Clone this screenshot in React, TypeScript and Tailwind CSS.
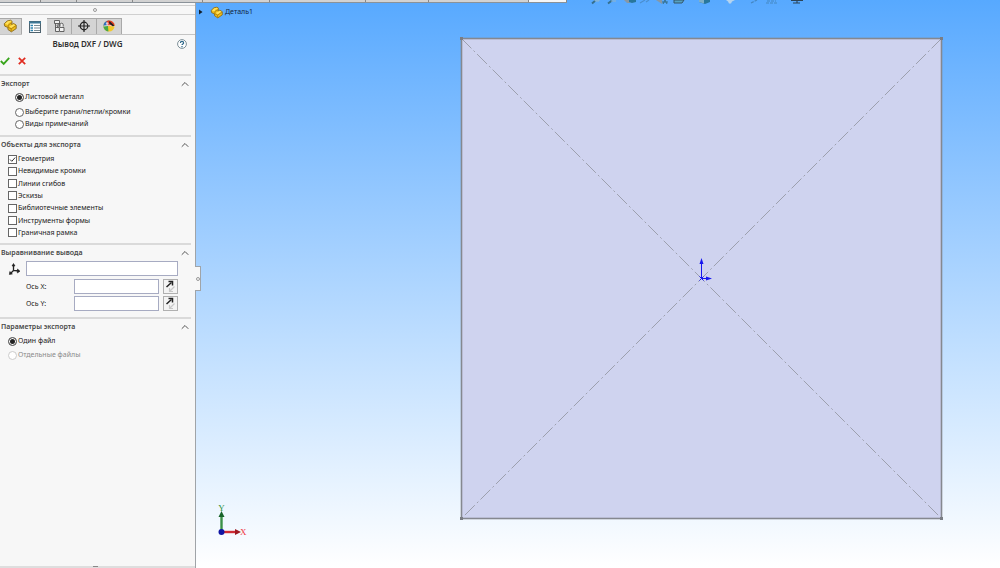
import { useState, type ReactNode } from "react"
import { ChevronUp } from "lucide-react"

const OBJECTS = [
  "Геометрия",
  "Невидимые кромки",
  "Линии сгибов",
  "Эскизы",
  "Библиотечные элементы",
  "Инструменты формы",
  "Граничная рамка",
]

function PartIcon({ className }: { className?: string }) {
  return (
    <svg viewBox="0 0 14 14" className={className} aria-hidden="true">
      <path
        d="M1.2 4.8 4.2 2l3.4-.8 1.6 1.3-.6 3 2-1 2.6 1.6v3.5L8.4 12.8 5 10.6 4.8 8.4 1.8 7.2z"
        fill="#efbd1c"
        stroke="#8a6a18"
        strokeWidth=".9"
        strokeLinejoin="round"
      />
      <path d="m2 4.8 2.9-2.5 2.6-.5 1 .8-2.9 1.5-.4 1.8zM6.2 7.6l4.4-2.4 1.7 1-4 2.7z" fill="#ffe15c" />
      <path d="M5.2 6v2.4l3 1.4 4.5-3M8.2 9.8v2.6M5.2 6l3.4-2" fill="none" stroke="#a87b08" strokeWidth=".8" />
    </svg>
  )
}

function PropertiesIcon() {
  return (
    <svg viewBox="0 0 14 14" className="h-[14px] w-[14px]" aria-hidden="true">
      <rect x="1.5" y="1.5" width="11" height="11" fill="#fff" stroke="#4d626e" />
      <path d="M1 2.5h12" stroke="#3d7896" strokeWidth="2" />
      <path d="M2.5 5.5h2.5M2.5 8h2.5M2.5 10.5h2.5" stroke="#2e82ad" strokeWidth="1.6" />
      <path d="M6 5.5h6M6 8h6M6 10.5h6" stroke="#7b8c94" strokeWidth="1" />
    </svg>
  )
}

function ConfigIcon() {
  return (
    <svg viewBox="0 0 14 14" className="h-[14px] w-[14px]" fill="none" stroke="#555" aria-hidden="true">
      <path d="M2.5 1.5h5v3h-5zM3.5 4.5v8H7M3.5 8.5h2.5" fill="#eee" strokeWidth=".9" />
      <path d="M5 6.5 7.5 4v3.5L6 9z" fill="#999" strokeWidth=".8" />
      <path d="M8 7.5V5.8a1.6 1.6 0 0 1 3.2 0v1.7M7.5 8.5h4.5v4H7.5z" fill="#f2f2f2" strokeWidth=".9" />
    </svg>
  )
}

function TargetIcon() {
  return (
    <svg viewBox="0 0 14 14" className="h-[14px] w-[14px]" fill="none" stroke="#222" aria-hidden="true">
      <circle cx="7" cy="7" r="3.8" strokeWidth="1.2" />
      <path d="M7 1v12M1 7h12" strokeWidth="1.2" />
    </svg>
  )
}

function AppearanceIcon() {
  return (
    <svg viewBox="0 0 14 14" className="h-[14px] w-[14px]" aria-hidden="true">
      <circle cx="7" cy="7" r="5.6" fill="#f2c92c" />
      <path d="M7 6.5V1.4A5.6 5.6 0 0 0 1.4 7z" fill="#2f6ec0" />
      <path d="M5 6.8 4.6 2A5.6 5.6 0 0 1 12.6 7z" fill="#e23b27" />
      <path d="M1.4 7H6l.4 5.6A5.6 5.6 0 0 1 1.4 7z" fill="#49a746" />
      <path d="M1.6 7.1 7 6.3l5.5.9" fill="none" stroke="#fff" strokeWidth=".7" />
      <path d="m7.5 2 4.8 4.5-1.3 1L7 4.2z" fill="#222" />
      <circle cx="5.2" cy="4.6" r="1.3" fill="#fff" opacity=".7" />
    </svg>
  )
}

const TABS = [
  { label: "Дерево", icon: <PartIcon className="h-[14px] w-[14px]" /> },
  { label: "Свойства", icon: <PropertiesIcon /> },
  { label: "Конфигурации", icon: <ConfigIcon /> },
  { label: "Размеры", icon: <TargetIcon /> },
  { label: "Внешний вид", icon: <AppearanceIcon /> },
]

function Section({ title, className, children }: { title: string; className: string; children: ReactNode }) {
  return (
    <section className={`mr-[4px] border-t-2 border-[#dadada] pt-[3px] ${className}`}>
      <h2 className="flex h-[10px] items-center justify-between pl-px font-semibold text-[#484848]">
        {title}
        <button type="button" aria-label={title}>
          <ChevronUp className="h-[12px] w-[12px] text-[#555]" strokeWidth={2} />
        </button>
      </h2>
      {children}
    </section>
  )
}

type RadioProps = {
  name: string
  label: string
  checked: boolean
  disabled?: boolean
  onChange?: () => void
}

function Radio({ name, label, checked, disabled, onChange }: RadioProps) {
  return (
    <label className="flex h-[12px] items-center gap-px has-disabled:text-[#8a8a8a]">
      <input
        type="radio"
        name={name}
        checked={checked}
        disabled={disabled}
        onChange={onChange}
        className="h-[9px] w-[9px] shrink-0 appearance-none rounded-full border border-[#666] bg-white checked:bg-[#222] checked:shadow-[inset_0_0_0_1px_white] disabled:border-[#ccc]"
      />
      {label}
    </label>
  )
}

function AxisRow({ label }: { label: string }) {
  return (
    <div className="flex h-[15px] items-center">
      <label className="flex flex-1 items-center">
        <span className="w-[48px]">{label}</span>
        <input type="text" className="h-[15px] w-0 flex-1 border border-[#a7abc2] bg-white px-1 outline-none" />
      </label>
      <button
        type="button"
        aria-label={`Обратить: ${label}`}
        className="ml-1 flex h-[15px] w-[15px] items-center justify-center border border-[#b0b0b0] bg-[#f4f4f4]"
      >
        <svg viewBox="0 0 13 13" className="h-[13px] w-[13px]" fill="none" aria-hidden="true">
          <path d="m2.5 7 5-4.5" stroke="#222" strokeWidth="1.5" />
          <path d="M4.5 1.6h4v4" stroke="#222" strokeWidth="1.5" />
          <path d="M10.5 6.5 6 11M5.5 8v3.5H9" stroke="#c8c8c8" strokeWidth="1.2" />
        </svg>
      </button>
    </div>
  )
}

function PropertyPanel() {
  const [exportMode, setExportMode] = useState(0)
  const [checked, setChecked] = useState([true, false, false, false, false, false, false])

  const toggle = (index: number) => setChecked(checked.map((value, i) => (i === index ? !value : value)))

  return (
    <aside className="relative flex w-[196px] shrink-0 flex-col border-r border-[#a0a4a8] bg-[#f7f7f7] pt-[5px] text-[7px] leading-[10px] text-[#202020]">
      <div className="flex h-[10px] items-center justify-center border-y border-[#d0d0d0] pr-[6px]">
        <span className="h-[4px] w-[4px] rounded-full border border-[#999]" />
      </div>

      <div className="mt-[3px] flex h-[17px] border-b border-[#c4c4c4]">
        {TABS.map((tab, i) => (
          <button
            key={tab.label}
            type="button"
            aria-label={tab.label}
            className={
              i === 1
                ? "-mb-px flex w-[25px] items-center justify-center bg-[#f7f7f7]"
                : "flex w-[25px] items-center justify-center border-r border-t border-[#a9a9a9] bg-[#d4d4d4] pb-px first:w-[22px] first:pr-[2px]"
            }
          >
            {tab.icon}
          </button>
        ))}
      </div>

      <header className="mt-[3px] flex h-[12px] items-center pr-[8px]">
        <h1 className="flex-1 pr-[2px] text-center text-[8px] font-semibold text-[#303030]">Вывод DXF / DWG</h1>
        <button type="button" aria-label="Справка">
          <svg viewBox="0 0 10 10" className="h-[10px] w-[10px]" fill="none" aria-hidden="true">
            <circle cx="5" cy="5" r="4.4" fill="#fff" stroke="#6f838c" strokeWidth=".9" />
            <path d="M3.4 3.9c0-2 3.2-2 3.2 0 0 1-1.6 1-1.6 2.2M5 7v1.2" stroke="#2b6689" strokeWidth="1.2" />
          </svg>
        </button>
      </header>

      <div className="flex h-[24px] items-center gap-[8px] pb-[2px]">
        <button type="button" aria-label="ОК">
          <svg viewBox="0 0 10 10" className="h-[10px] w-[10px]" fill="none" aria-hidden="true">
            <path d="m.8 5 2.9 2.9L9.2 1.8" stroke="#39a51c" strokeWidth="1.8" />
          </svg>
        </button>
        <button type="button" aria-label="Отмена">
          <svg viewBox="0 0 8 8" className="h-[8px] w-[8px]" fill="none" aria-hidden="true">
            <path d="m.8.8 6.4 6.4M7.2.8.8 7.2" stroke="#e02c20" strokeWidth="1.7" />
          </svg>
        </button>
      </div>

      <Section title="Экспорт" className="h-[61px]">
        <div className="mt-[2px] pl-[15px]">
          <Radio name="mode" label="Листовой металл" checked={exportMode === 0} onChange={() => setExportMode(0)} />
          <div className="mt-[3px]">
            <Radio
              name="mode"
              label="Выберите грани/петли/кромки"
              checked={exportMode === 1}
              onChange={() => setExportMode(1)}
            />
            <Radio name="mode" label="Виды примечаний" checked={exportMode === 2} onChange={() => setExportMode(2)} />
          </div>
        </div>
      </Section>

      <Section title="Объекты для экспорта" className="h-[108px]">
        <div className="mt-[3px] grid h-[86px] content-between pl-[8px]">
          {OBJECTS.map((name, i) => (
            <label key={name} className="flex h-[12px] items-center gap-px">
              <span className="relative h-[9px] w-[9px]">
                <input
                  type="checkbox"
                  checked={checked[i]}
                  onChange={() => toggle(i)}
                  className="peer block h-[9px] w-[9px] appearance-none border border-[#666] bg-white"
                />
                <svg
                  viewBox="0 0 9 9"
                  className="pointer-events-none absolute inset-0 hidden peer-checked:block"
                  fill="none"
                  aria-hidden="true"
                >
                  <path d="m2 4.5 1.8 1.8L7.2 2.5" stroke="#333" />
                </svg>
              </span>
              {name}
            </label>
          ))}
        </div>
      </Section>

      <Section title="Выравнивание вывода" className="h-[74px]">
        <div className="mt-[3px] pl-[8px] pr-[13px]">
          <div className="flex items-center gap-1">
            <svg viewBox="0 0 14 14" className="h-[14px] w-[14px]" fill="none" stroke="#222" aria-hidden="true">
              <path d="M5.5 3v5.5l5.5.5M5.5 8.5l-3 3" strokeWidth="1.3" />
              <path d="M4 4 5.5 1.5 7 4zM9.5 7 12 9.2 9.3 11zM1.8 9.5l-.4 3 3-.6z" fill="#222" strokeWidth=".6" />
            </svg>
            <input
              type="text"
              aria-label="Начало координат"
              className="h-[15px] w-0 flex-1 border border-[#a7abc2] bg-white px-1 outline-none"
            />
          </div>
          <div className="mt-[3px] grid gap-[2px] pl-[18px]">
            <AxisRow label="Ось X:" />
            <AxisRow label="Ось Y:" />
          </div>
        </div>
      </Section>

      <Section title="Параметры экспорта" className="flex-1">
        <div className="mt-[3px] grid gap-[2px] pl-[8px]">
          <Radio name="files" label="Один файл" checked onChange={() => {}} />
          <Radio name="files" label="Отдельные файлы" checked={false} disabled />
        </div>
      </Section>

      <footer className="flex h-[2px] justify-center bg-[#dedede] pr-1">
        <span className="h-px w-[5px] bg-[#888]" />
      </footer>

      <button
        type="button"
        aria-label="Свернуть панель"
        className="absolute -right-[6px] top-[266px] z-10 flex h-[25px] w-[6px] items-center justify-center border-y border-r border-[#a0a4a8] bg-[#f7f7f7]"
      >
        <span className="h-[4px] w-[4px] rounded-full border border-[#999]" />
      </button>
    </aside>
  )
}

function ViewToolbar() {
  return (
    <svg viewBox="0 0 214 6" className="absolute left-[394px] top-0 h-[6px] w-[214px]" fill="none" aria-hidden="true">
      <path d="m2 3.5 3.5-3M18 3.5l4-3" stroke="#35708f" strokeWidth="2" />
      <path d="M5 0h4v1H5zM21 1h5" stroke="#8fb6cf" />
      <path d="M34 0h7l-1 3h-3z" fill="#8798a5" />
      <path d="M39 0h7v2l-4 1-3-1z" fill="#28779c" />
      <path d="m50 3 5-3M56 2l3-2" stroke="#4b8fcf" strokeWidth="1.2" />
      <path d="m66 0 6 4v-4z" fill="#8798a5" />
      <path d="m73 4 2-4 2 4M72 2h6" stroke="#35708f" />
      <path d="M84 0h10l-2 3h-8z" fill="#55a2c2" stroke="#35566a" />
      <path d="M109 0h11v2l-5 2-6-2z" fill="#28779c" />
      <path d="M109 0h5v3.5l-5-1.500z" fill="#7fb0c8" />
      <path d="M136 0h9l-3 1.500-1 2h-2l-1-2z" fill="#b5d4ef" />
      <path d="m161 3 6-3M176 3h11M177 1h9" stroke="#4587c2" strokeWidth="1.2" strokeDasharray="3 1" />
      <path d="M201 .5h12M207 0v3M203 3h7" stroke="#2b4458" strokeWidth="1.1" />
    </svg>
  )
}

function Sketch() {
  return (
    <svg viewBox="0 0 484 484" className="absolute left-[263px] top-[36px] h-[484px] w-[484px]" fill="none">
      <rect x="2.5" y="2.5" width="480" height="480" fill="#cfd3ef" stroke="#85888f" strokeWidth="1.6" />
      <path
        d="m2.5 2.5 480 480M482.5 2.5l-480 480"
        stroke="#9da0ae"
        strokeWidth="1"
        strokeDasharray="14 3 2 3"
      />
      <path d="M1 1h3v3H1zM481 1h3v3h-3zM1 481h3v3H1zM481 481h3v3h-3z" fill="#7a7d84" />
      <path d="M242.5 242.5V226M242.5 242.5H249" stroke="#1717ef" />
      <path d="m240.5 228 2-6 2 6zM247 240.5l6 2-6 2z" fill="#1717ef" />
      <path d="m240.5 240.5 4 4M244.5 240.5l-4 4" stroke="#1717ef" />
    </svg>
  )
}

function Triad() {
  return (
    <svg viewBox="0 0 34 34" className="absolute bottom-[30px] left-[18px] h-[34px] w-[34px] overflow-visible">
      <path d="M7.500 26V12" stroke="#3c9247" strokeWidth="2.4" />
      <path d="m4.500 13 3-6 3 6z" fill="#17632a" />
      <path d="M8 28h14" stroke="#cf2c35" strokeWidth="2.4" />
      <path d="m21 25 6 3-6 3z" fill="#9d1a22" />
      <circle cx="7.500" cy="28" r="3" fill="#1016a4" />
      <text x="7.500" y="7" textAnchor="middle" fill="#2f8f3c" fontSize="9" fontFamily="Liberation Serif">
        Y
      </text>
      <text x="26" y="31" fill="#f0323c" fontSize="9" fontFamily="Liberation Serif">
        X
      </text>
    </svg>
  )
}

export default function App() {
  return (
    <div className="relative flex h-screen min-h-[420px] overflow-hidden font-['Noto_Sans',sans-serif]">
      <div className="absolute left-0 top-0 z-10 flex h-[3px] w-[567px] border-b border-[#8a9299] bg-[#d2d2d2]">
        <span className="w-[41px] border-r border-[#888]" />
        <span className="w-[36px] border-r border-[#888]" />
        <span className="w-[56px] border-r border-[#888]" />
        <span className="w-[70px] border-r border-[#888]" />
        <span className="w-[67px] border-r border-[#888]" />
        <span className="w-[96px] border-r border-[#888]" />
        <span className="w-[63px] border-r border-[#888]" />
        <span className="w-[100px] border-r border-[#888]" />
        <span className="flex-1 border-r border-[#888] bg-[#f7f7f7]" />
      </div>

      <PropertyPanel />

      <main className="relative min-w-0 flex-1 overflow-hidden bg-linear-to-b from-[#57a9ff] to-white">
        <div className="mt-[6px] flex h-[12px] items-center pl-[3px] text-[7px] text-[#12263c]">
          <svg viewBox="0 0 4 6" className="h-[6px] w-[4px]" aria-hidden="true">
            <path d="m0 .5 3.500 2.500-3.500 2.500z" fill="#14202c" />
          </svg>
          <PartIcon className="ml-[7px] h-[13px] w-[13px]" />
          <span className="ml-[2px]">Деталь1</span>
        </div>
        <ViewToolbar />
        <Sketch />
        <Triad />
      </main>
    </div>
  )
}
